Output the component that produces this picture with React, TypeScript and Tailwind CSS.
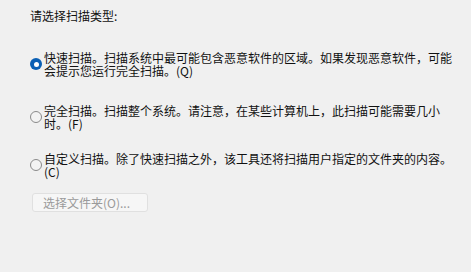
import React from 'react';

const font = { fontFamily: '"Noto Sans CJK SC", "Noto Sans", sans-serif' };

function Radio({ checked }: { checked?: boolean }) {
  if (checked) {
    return (
      <span className="flex h-[12px] w-[12px] shrink-0 items-center justify-center rounded-full bg-[#0a5fb4]">
        <span className="h-[5px] w-[5px] rounded-full bg-white" />
      </span>
    );
  }
  return <span className="h-[12px] w-[12px] shrink-0 rounded-full border border-[#8a8a8a] bg-[#f3f3f3]" />;
}

function Option({ checked, lines, className }: { checked?: boolean; lines: string[]; className: string }) {
  return (
    <div className={`flex items-center gap-[2px] ${className}`}>
      <Radio checked={checked} />
      <div className="text-[12px] leading-[13px] text-[#111]">
        {lines.map((l) => (
          <div key={l} className="whitespace-nowrap">
            {l}
          </div>
        ))}
      </div>
    </div>
  );
}

export default function App() {
  return (
    <div className="h-[272px] w-[471px] overflow-hidden bg-[#f0f0f0] pl-[30px] pt-[10px]" style={font}>
      <div className="text-[12px] leading-[12px] text-[#111]">请选择扫描类型:</div>

      <Option
        checked
        className="mt-[29px]"
        lines={['快速扫描。扫描系统中最可能包含恶意软件的区域。如果发现恶意软件，可能', '会提示您运行完全扫描。(Q)']}
      />
      <Option
        className="mt-[27px]"
        lines={['完全扫描。扫描整个系统。请注意，在某些计算机上，此扫描可能需要几小', '时。(F)']}
      />
      <Option
        className="mt-[22px]"
        lines={['自定义扫描。除了快速扫描之外，该工具还将扫描用户指定的文件夹的内容。', '(C)']}
      />

      <button
        type="button"
        disabled
        className="ml-[2px] mt-[15px] flex h-[19px] w-[116px] items-center rounded-[3px] border border-[#e0e0e0] bg-[#f6f6f6] pl-[10px] text-[12px] leading-[12px] text-[#9a9a9a]"
      >
        选择文件夹(O)...
      </button>
    </div>
  );
}
